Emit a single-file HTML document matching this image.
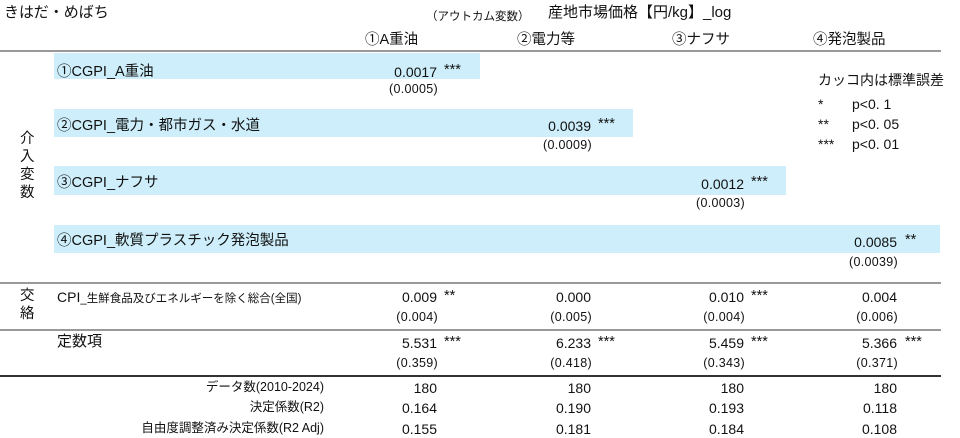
<!DOCTYPE html>
<html><head><meta charset="utf-8"><style>
body{margin:0;width:960px;height:438px;background:#fff;position:relative;overflow:hidden;font-family:"Liberation Sans","Noto Sans CJK JP",sans-serif;color:#111;}
div{position:absolute;white-space:nowrap;}
.bar{background:#cdeefa;}
.v{font-size:14px;width:200px;text-align:right;line-height:16px;}
.s{font-size:12.5px;width:200px;text-align:right;line-height:14px;letter-spacing:0.3px;}
.st{font-size:14.5px;line-height:12px;}
.h{font-size:14.5px;line-height:18px;}
.line{height:2px;background:#999;left:0;width:941px;}
</style></head><body>
<div class="h" style="left:4px;top:4px;font-size:15px;">きはだ・めばち</div>
<div style="left:426px;top:8px;font-size:11.5px;">（アウトカム変数）</div>
<div class="h" style="left:548px;top:4px;font-size:15px;">産地市場価格【円/kg】_log</div>
<div class="h" style="left:365px;top:31px;">①A重油</div>
<div class="h" style="left:517px;top:31px;">②電力等</div>
<div class="h" style="left:672px;top:31px;">③ナフサ</div>
<div class="h" style="left:813px;top:31px;">④発泡製品</div>
<div class="line" style="top:50px;"></div>

<div class="bar" style="left:54px;top:53px;width:426px;height:26px;"></div>
<div class="bar" style="left:54px;top:109px;width:579px;height:28px;"></div>
<div class="bar" style="left:54px;top:166px;width:732px;height:29px;"></div>
<div class="bar" style="left:54px;top:225px;width:886px;height:28px;"></div>

<div class="h" style="left:57px;top:63px;">①CGPI_A重油</div>
<div class="h" style="left:57px;top:117px;">②CGPI_電力・都市ガス・水道</div>
<div class="h" style="left:57px;top:174px;">③CGPI_ナフサ</div>
<div class="h" style="left:57px;top:232px;">④CGPI_軟質プラスチック発泡製品</div>

<div class="h" style="left:20px;top:130px;line-height:18px;white-space:normal;width:16px;">介<br>入<br>変<br>数</div>

<div style="left:818px;top:70px;font-size:14px;">カッコ内は標準誤差</div>
<div style="left:818px;top:96px;font-size:14px;">*</div><div style="left:852px;top:96px;font-size:14px;">p&lt;0. 1</div>
<div style="left:818px;top:116px;font-size:14px;">**</div><div style="left:852px;top:116px;font-size:14px;">p&lt;0. 05</div>
<div style="left:818px;top:136px;font-size:14px;">***</div><div style="left:852px;top:136px;font-size:14px;">p&lt;0. 01</div>

<div class="v" style="left:237px;top:64px;">0.0017</div><div class="st" style="left:444px;top:64px;">***</div>
<div class="s" style="left:238px;top:82px;">(0.0005)</div>
<div class="v" style="left:391px;top:118px;">0.0039</div><div class="st" style="left:598px;top:118px;">***</div>
<div class="s" style="left:392px;top:138px;">(0.0009)</div>
<div class="v" style="left:544px;top:176px;">0.0012</div><div class="st" style="left:751px;top:176px;">***</div>
<div class="s" style="left:545px;top:196px;">(0.0003)</div>
<div class="v" style="left:697px;top:234px;">0.0085</div><div class="st" style="left:905px;top:234px;">**</div>
<div class="s" style="left:698px;top:255px;">(0.0039)</div>

<div class="line" style="top:282px;"></div>
<div class="h" style="left:20px;top:287px;line-height:18px;white-space:normal;width:16px;">交<br>絡</div>
<div style="left:57px;top:289px;font-size:14px;">CPI<span style="font-size:11.5px;">_生鮮食品及びエネルギーを除く総合(全国)</span></div>
<div class="v" style="left:237px;top:289px;">0.009</div><div class="st" style="left:444px;top:290px;">**</div>
<div class="s" style="left:238px;top:310px;">(0.004)</div>
<div class="v" style="left:391px;top:289px;">0.000</div>
<div class="s" style="left:392px;top:310px;">(0.005)</div>
<div class="v" style="left:544px;top:289px;">0.010</div><div class="st" style="left:751px;top:290px;">***</div>
<div class="s" style="left:545px;top:310px;">(0.004)</div>
<div class="v" style="left:697px;top:289px;">0.004</div>
<div class="s" style="left:698px;top:310px;">(0.006)</div>

<div class="line" style="top:329px;"></div>
<div class="h" style="left:57px;top:333px;font-size:15px;">定数項</div>
<div class="v" style="left:237px;top:335px;">5.531</div><div class="st" style="left:444px;top:336px;">***</div>
<div class="s" style="left:238px;top:356px;">(0.359)</div>
<div class="v" style="left:391px;top:335px;">6.233</div><div class="st" style="left:598px;top:336px;">***</div>
<div class="s" style="left:392px;top:356px;">(0.418)</div>
<div class="v" style="left:544px;top:335px;">5.459</div><div class="st" style="left:751px;top:336px;">***</div>
<div class="s" style="left:545px;top:356px;">(0.343)</div>
<div class="v" style="left:697px;top:335px;">5.366</div><div class="st" style="left:905px;top:336px;">***</div>
<div class="s" style="left:698px;top:356px;">(0.371)</div>

<div class="line" style="top:375px;background:#333;"></div>
<div class="s" style="left:124px;top:380px;font-size:12.5px;letter-spacing:0;">データ数(2010-2024)</div>
<div class="s" style="left:124px;top:400px;font-size:12.5px;letter-spacing:0;">決定係数(R2)</div>
<div class="s" style="left:124px;top:421px;font-size:12.5px;letter-spacing:0;">自由度調整済み決定係数(R2 Adj)</div>
<div class="v" style="left:237px;top:380px;">180</div><div class="v" style="left:391px;top:380px;">180</div><div class="v" style="left:544px;top:380px;">180</div><div class="v" style="left:697px;top:380px;">180</div>
<div class="v" style="left:237px;top:400px;">0.164</div><div class="v" style="left:391px;top:400px;">0.190</div><div class="v" style="left:544px;top:400px;">0.193</div><div class="v" style="left:697px;top:400px;">0.118</div>
<div class="v" style="left:237px;top:421px;">0.155</div><div class="v" style="left:391px;top:421px;">0.181</div><div class="v" style="left:544px;top:421px;">0.184</div><div class="v" style="left:697px;top:421px;">0.108</div>
</body></html>
